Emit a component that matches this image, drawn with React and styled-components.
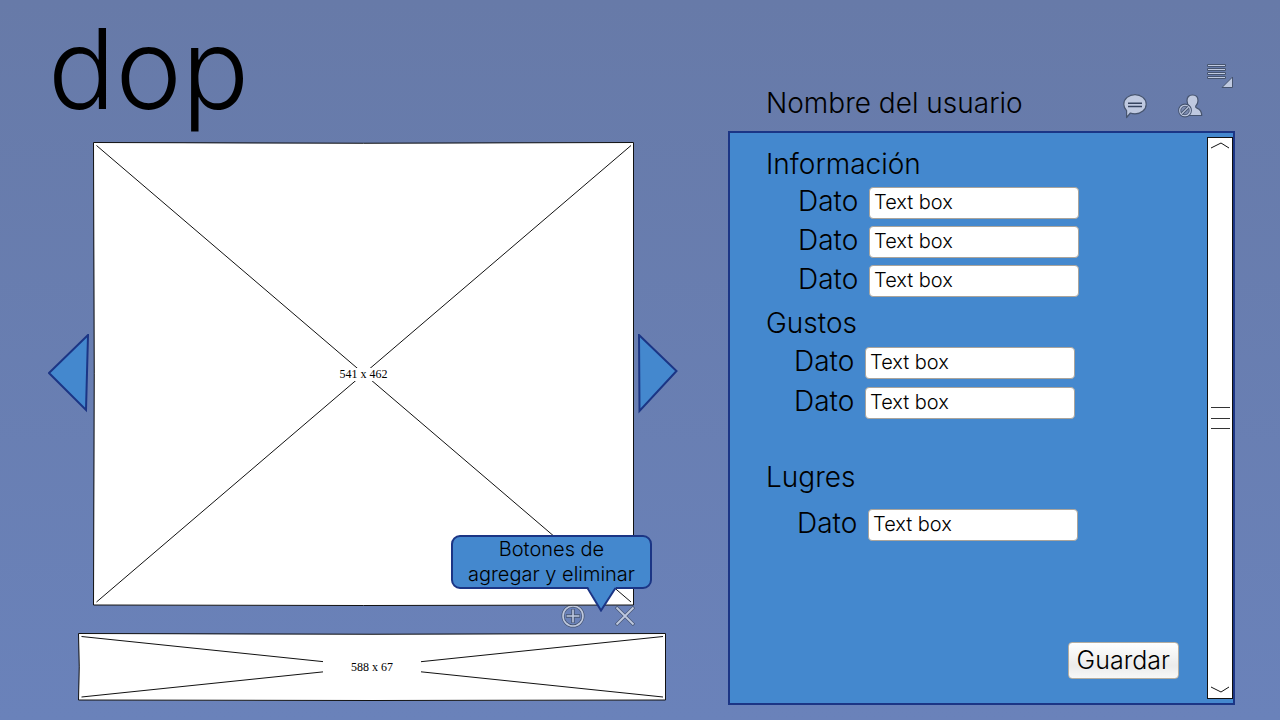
import React from "react";
import styled, { createGlobalStyle } from "styled-components";

const ink = "#1b3585";
const blue = "#4488ce";
const iconFill = "#bfc9e0";
const iconLine = "#46546f";

const GlobalStyle = createGlobalStyle`
  *, *::before, *::after { box-sizing: border-box; }
  body {
    margin: 0;
    color: #000;
    font-family: Inter, "Open Sans", sans-serif;
    font-weight: 300;
    background: #6a82ba;
  }
`;

const Page = styled.main`
  display: grid;
  grid-template-columns: minmax(0, 728fr) minmax(0, 552fr);
  min-height: 100vh;
  background: linear-gradient(#677aa8, #6a82ba);
`;

const GalleryColumn = styled.section`
  display: flex;
  flex-direction: column;
  padding: 0 50px 16px 48px;
`;

const Logo = styled.h1`
  margin: 0;
  padding-top: 8px;
  height: 142px;
  font-size: 112px;
  line-height: 120px;
  font-weight: 300;
`;

const Carousel = styled.div`
  display: flex;
  align-items: center;
  gap: 4px;
`;

const PlainButton = styled.button`
  display: block;
  flex: none;
  padding: 0;
  border: 0;
  background: none;
  cursor: pointer;

  svg { display: block; }
`;

const Frame = styled.figure`
  position: relative;
  display: grid;
  place-items: center;
  flex: 1;
  min-width: 0;
  margin: 0;
  aspect-ratio: ${(p) => p.$ratio};
`;

const FrameLines = styled.svg`
  position: absolute;
  inset: 0;
  width: 100%;
  height: 100%;
`;

const FrameSize = styled.figcaption`
  position: relative;
  padding: 0 28px;
  background: #fff;
  font: 12px/13px "Liberation Serif", serif;
`;

const Tip = styled.div`
  position: absolute;
  right: -18px;
  bottom: 17px;
  width: 201px;
  border: 2px solid ${ink};
  border-radius: 9px;
  background: ${blue};
  font-size: 20px;
  line-height: 25px;
  text-align: center;
`;

const TipTail = styled.svg`
  position: absolute;
  right: 32px;
  top: 100%;
`;

const Actions = styled.div`
  display: flex;
  justify-content: flex-end;
  align-items: center;
  gap: 30px;
  height: 27px;
  padding: 0 43px 8px 0;
`;

const Strip = styled.div`
  display: flex;
  margin: 0 12px 0 30px;
`;

const ProfileColumn = styled.section`
  display: flex;
  flex-direction: column;
  padding: 0 45px 15px 0;
`;

const ProfileHeader = styled.header`
  display: flex;
  align-items: flex-end;
  min-height: 131px;
  padding: 62px 0 12px 38px;
`;

const UserName = styled.h2`
  flex: 1;
  margin: 0;
  font-size: 28px;
  line-height: 32px;
  font-weight: 300;
`;

const HeaderTools = styled.div`
  display: flex;
  gap: 30px;
  margin-right: 4px;
`;

const MenuButton = styled(PlainButton)`
  align-self: flex-start;
`;

const Panel = styled.div`
  display: flex;
  flex: 1;
  border: 2px solid ${ink};
  background: ${blue};
`;

const Form = styled.form`
  display: flex;
  flex: 1;
  flex-direction: column;
  min-width: 0;
  padding: 15px 28px 24px 36px;
`;

const Group = styled.section`
  display: flex;
  flex-direction: column;
  gap: ${(p) => p.$gap}px;
  margin-bottom: ${(p) => p.$after}px;
`;

const GroupTitle = styled.h3`
  margin: 0;
  font-size: 28px;
  line-height: 32px;
  font-weight: 300;
`;

const Field = styled.div`
  display: flex;
  align-items: center;
  gap: 8px;
  height: 32px;
  padding-left: ${(p) => p.$indent}px;
`;

const FieldLabel = styled.label`
  width: 63px;
  font-size: 28px;
  line-height: 28px;
  padding-bottom: 4px;
`;

const TextBox = styled.input`
  width: 210px;
  height: 32px;
  min-width: 0;
  padding: 0 4px 2px;
  border: 1px solid #a9a49c;
  border-radius: 4px;
  background: #fff;
  color: #000;
  font: inherit;
  font-size: 20px;
`;

const SaveButton = styled.button`
  align-self: flex-end;
  height: 37px;
  margin-top: auto;
  padding: 0 8px 2px;
  border: 1px solid #b5ada0;
  border-radius: 4px;
  background: linear-gradient(#fff, #ebebeb 65%, #f8f8f8);
  color: #000;
  font: inherit;
  font-size: 25px;
  line-height: 32px;
`;

const ScrollBar = styled.div`
  display: flex;
  flex-direction: column;
  align-items: center;
  justify-content: space-between;
  width: 26px;
  margin: 4px 0;
  padding: 4px 0;
  border: 1px solid #111;
  background: #fff;
`;

const Grip = styled.div`
  width: 19px;
  height: 22px;
  border: solid #333;
  border-width: 1px 0;
  background: linear-gradient(#333, #333) center / 100% 1px no-repeat;
`;

function Placeholder({ width, height, label, children }) {
  return (
    <Frame $ratio={`${width} / ${height}`}>
      <FrameLines viewBox={`0 0 ${width} ${height}`} preserveAspectRatio="none" aria-hidden="true">
        <path
          d={`M.5 .5Q${width / 2} 2 ${width - 0.5} .5V${height - 1}Q${width / 2} ${height} .5 ${height - 1}Q2 ${height / 2} .5 .5Z`}
          fill="#fff"
          stroke="#111"
        />
        <path
          d={`M3.5 3.5L${width - 3} ${height - 4}M3.5 ${height - 4}L${width - 3} 3.5`}
          fill="none"
          stroke="#111"
        />
      </FrameLines>
      <FrameSize>{label}</FrameSize>
      {children}
    </Frame>
  );
}

function ChatIcon() {
  return (
    <svg width="26" height="26" viewBox="0 0 26 26" fill={iconFill} stroke={iconLine} strokeWidth="1.2">
      <path d="M13 1.6c6.2 0 11.2 4.2 11.2 9.6s-5 9.6-11.2 9.6c-1.700 0-3.200-.2-4.600-.8L4.600 24.500V17.600C2.900 15.900 1.800 13.700 1.800 11.200 1.800 5.800 6.800 1.600 13 1.600Z" strokeLinejoin="round" />
      <path d="M6 10.200h14M6 13.400h14" stroke="#36445f" strokeWidth="1.500" />
    </svg>
  );
}

function BlockUserIcon() {
  return (
    <svg width="25" height="26" viewBox="0 0 25 26" fill={iconFill} stroke={iconLine} strokeWidth="1.2">
      <path d="M14.500 2C18 2 20 4.300 20 7.700c0 2.300-1.100 4.100-2.300 5.400-.4 1 .2 1.500 1.300 2 3 1.200 4.700 3.400 4.700 7.400H9.500V13.500l2-.3C9.900 11.900 9 9.900 9 7.700 9 4.300 11 2 14.500 2Z" />
      <circle cx="7" cy="17.500" r="6.300" fill="#7c8bb0" />
      <circle cx="7" cy="17.500" r="5.200" fill="none" stroke={iconFill} strokeWidth="1.300" />
      <circle cx="7" cy="17.500" r="4.200" fill="none" strokeWidth=".8" />
      <path d="M3.600 20.900L10.400 14.100" stroke={iconLine} strokeWidth="3" />
      <path d="M3.600 20.900L10.400 14.100" stroke={iconFill} strokeWidth="1.300" />
    </svg>
  );
}

function MenuIcon() {
  return (
    <svg width="28" height="27" viewBox="0 0 28 27" fill={iconFill} stroke={iconLine}>
      <path d="M.5 2.500h18v2H.5zM.5 6.500h18v2H.5zM.5 10.500h18v2H.5zM.5 14.500h18v2H.5z" />
      <path d="M25.500 15v10.500h-10.500z" />
    </svg>
  );
}

function AddIcon() {
  return (
    <svg width="24" height="24" viewBox="0 0 24 24" fill="none">
      <circle cx="12" cy="12" r="10" stroke={iconLine} strokeWidth="3" />
      <path d="M12 5v14M5 12h14" stroke={iconLine} strokeWidth="3.400" />
      <circle cx="12" cy="12" r="10" stroke={iconFill} strokeWidth="1.600" />
      <path d="M12 5.600v12.800M5.600 12h12.800" stroke={iconFill} strokeWidth="1.600" />
    </svg>
  );
}

function RemoveIcon() {
  return (
    <svg width="20" height="20" viewBox="0 0 20 20">
      <path d="M1 1l18 18M19 1L1 19" stroke={iconLine} strokeWidth="3.200" />
      <path d="M1.500 1.500l17 17M18.500 1.500l-17 17" stroke={iconFill} strokeWidth="1.800" />
    </svg>
  );
}

const groups = [
  { title: "Información", fields: 3, gap: 7, after: 10, indent: 32 },
  { title: "Gustos", fields: 2, gap: 8, after: 42, indent: 28 },
  { title: "Lugres", fields: 1, gap: 16, after: 24, indent: 31 },
];

export default function App() {
  return (
    <>
      <GlobalStyle />
      <Page>
        <GalleryColumn>
          <Logo>dop</Logo>
          <Carousel>
            <PlainButton type="button" aria-label="Anterior">
              <svg width="41" height="80" viewBox="0 0 41 80">
                <path d="M1 39L40 1 38 76Z" fill={blue} stroke={ink} strokeWidth="2" />
              </svg>
            </PlainButton>
            <Placeholder width={541} height={464} label="541 x 462">
              <Tip role="tooltip">
                Botones de
                <br />
                agregar y eliminar
                <TipTail width="32" height="25" viewBox="0 0 32 25" aria-hidden="true">
                  <path d="M2 0L15 23.500 30 0" fill={blue} />
                  <path d="M1.500 1L15 23.500 29.500 1" fill="none" stroke={ink} strokeWidth="2" />
                </TipTail>
              </Tip>
            </Placeholder>
            <PlainButton type="button" aria-label="Siguiente">
              <svg width="40" height="80" viewBox="0 0 40 80">
                <path d="M1 1L38.500 37 1.500 77Z" fill={blue} stroke={ink} strokeWidth="2" />
              </svg>
            </PlainButton>
          </Carousel>
          <Actions>
            <PlainButton type="button" aria-label="Agregar"><AddIcon /></PlainButton>
            <PlainButton type="button" aria-label="Eliminar"><RemoveIcon /></PlainButton>
          </Actions>
          <Strip>
            <Placeholder width={588} height={68} label="588 x 67" />
          </Strip>
        </GalleryColumn>

        <ProfileColumn>
          <ProfileHeader>
            <UserName>Nombre del usuario</UserName>
            <HeaderTools>
              <PlainButton type="button" aria-label="Mensajes"><ChatIcon /></PlainButton>
              <PlainButton type="button" aria-label="Bloquear usuario"><BlockUserIcon /></PlainButton>
            </HeaderTools>
            <MenuButton type="button" aria-label="Menú"><MenuIcon /></MenuButton>
          </ProfileHeader>
          <Panel>
            <Form onSubmit={(e) => e.preventDefault()}>
              {groups.map((g) => (
                <Group key={g.title} $gap={g.gap} $after={g.after}>
                  <GroupTitle>{g.title}</GroupTitle>
                  {Array.from({ length: g.fields }, (_, i) => {
                    const id = `${g.title}-${i}`;
                    return (
                      <Field key={id} $indent={g.indent}>
                        <FieldLabel htmlFor={id}>Dato</FieldLabel>
                        <TextBox id={id} type="text" defaultValue="Text box" />
                      </Field>
                    );
                  })}
                </Group>
              ))}
              <SaveButton type="submit">Guardar</SaveButton>
            </Form>
            <ScrollBar>
              <PlainButton type="button" aria-label="Subir">
                <svg width="20" height="8" viewBox="0 0 20 8" fill="none" stroke="#111">
                  <path d="M1 6L11 1 19 6" />
                </svg>
              </PlainButton>
              <Grip />
              <PlainButton type="button" aria-label="Bajar">
                <svg width="20" height="8" viewBox="0 0 20 8" fill="none" stroke="#111">
                  <path d="M1 1L11 6 19 1" />
                </svg>
              </PlainButton>
            </ScrollBar>
          </Panel>
        </ProfileColumn>
      </Page>
    </>
  );
}
